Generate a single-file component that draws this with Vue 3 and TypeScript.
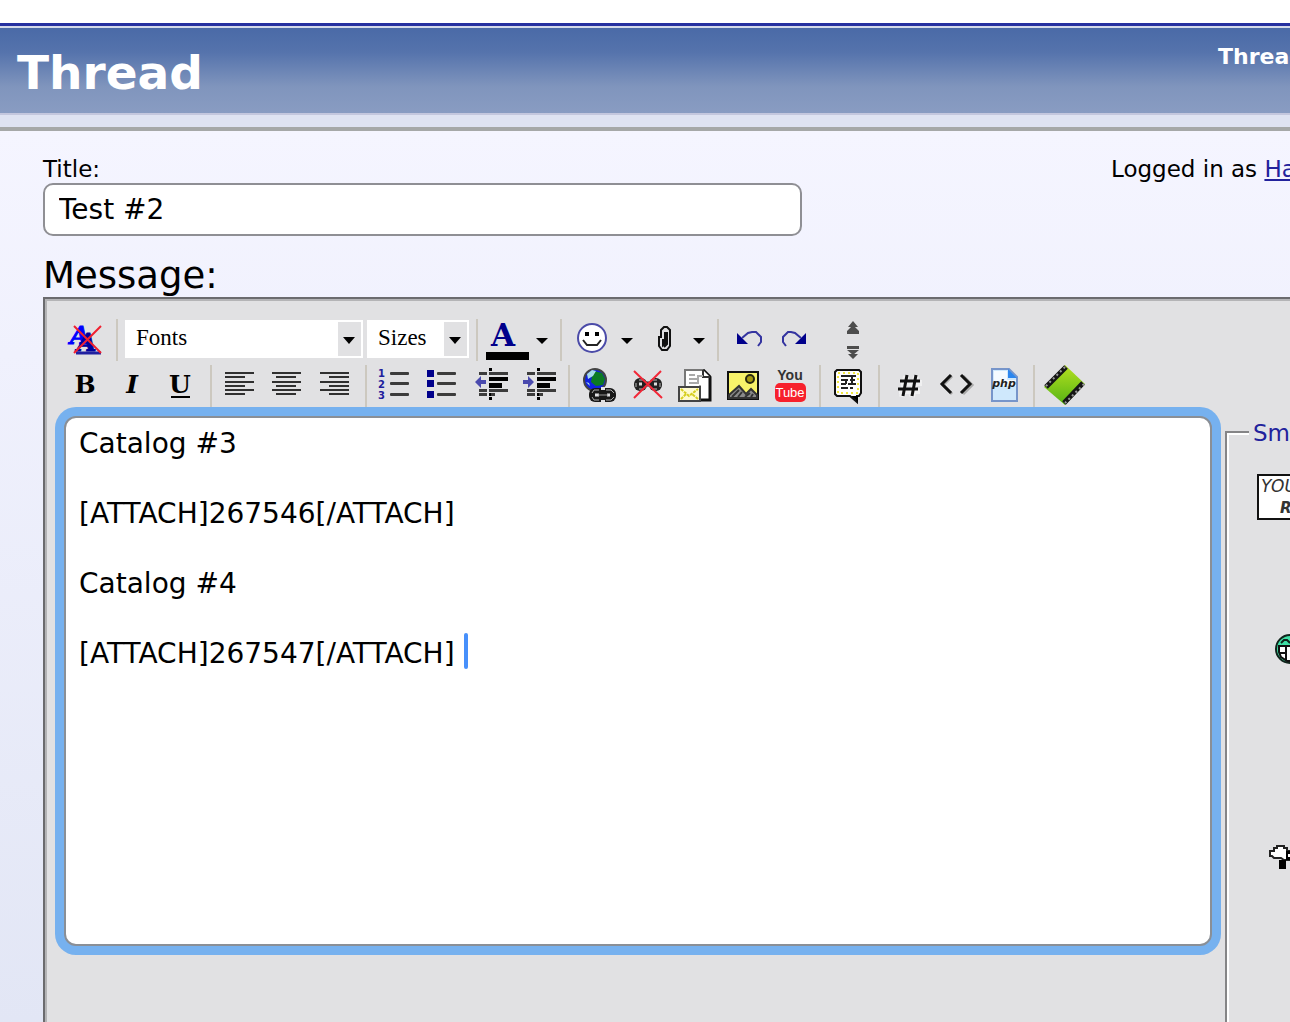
<script setup lang="ts">
import { ref } from 'vue'

const title = ref('Test #2')
const message = ref(
  'Catalog #3\n\n[ATTACH]267546[/ATTACH]\n\nCatalog #4\n\n[ATTACH]267547[/ATTACH]',
)
const fonts = ['Fonts']
const sizes = ['Sizes']
const alignments = [
  { name: 'Align left', long: 9, short: 9 },
  { name: 'Align center', long: 8, short: 12 },
  { name: 'Align right', long: 8, short: 17 },
]
const alignRows = [7, 16, 24]
const bulletRows = [9, 19, 30]
const indents = [
  { name: 'Decrease indent', arrow: 'M8 17l6-6v4h5v4h-5v4z' },
  { name: 'Increase indent', arrow: 'M19 17l-6-6v4H8v4h5v4z' },
]
</script>

<template>
  <div class="page">
    <header class="banner">
      <h1>Thread</h1>
      <a class="tools" href="#">Thread</a>
    </header>
    <div class="strip"></div>

    <main>
      <div class="heading">
        <div class="title-field">
          <label for="title">Title:</label>
          <input id="title" v-model="title" type="text" />
        </div>
        <p class="login">Logged in as <a href="#">Ha</a></p>
      </div>
      <label class="message-label" for="message">Message:</label>

      <section class="editor">
        <div class="row row-top">
          <button type="button" aria-label="Remove formatting">
            <svg viewBox="0 0 48 42">
              <g font-family="DejaVu Serif" font-weight="bold" font-style="italic">
                <text x="7" y="25" font-size="25" fill="#0000ff" stroke="#0000ff">A</text>
                <text x="14" y="32" font-size="25" fill="#00009c" stroke="#00009c">A</text>
              </g>
              <path d="M13 34h25" stroke="#2020a0" stroke-width="3" />
              <path d="M11 7l27 27M38 7L11 34" stroke="#f02030" stroke-width="2" />
            </svg>
          </button>
          <i class="sep"></i>
          <div class="combo combo-font">
            <select aria-label="Fonts"><option v-for="f in fonts" :key="f">{{ f }}</option></select>
            <span class="drop"><svg viewBox="0 0 12 7"><path d="M0 0h12L6 7z" /></svg></span>
          </div>
          <div class="combo combo-size">
            <select aria-label="Sizes"><option v-for="s in sizes" :key="s">{{ s }}</option></select>
            <span class="drop"><svg viewBox="0 0 12 7"><path d="M0 0h12L6 7z" /></svg></span>
          </div>
          <i class="sep"></i>
          <button type="button" class="color" aria-label="Text color">
            <svg viewBox="0 0 48 42">
              <text x="20" y="27" font-size="31" text-anchor="middle" font-family="DejaVu Serif" font-weight="bold" fill="#00008b">A</text>
              <path d="M3 33h43v8H3z" />
            </svg>
          </button>
          <button type="button" class="more" aria-label="More colors"><svg viewBox="0 0 24 42"><path d="M5 19h12l-6 6z" /></svg></button>
          <i class="sep"></i>
          <button type="button" class="spaced" aria-label="Smilies">
            <svg viewBox="0 0 48 42">
              <circle cx="24" cy="19" r="14" fill="#fff" stroke="#4b4ba8" stroke-width="2" />
              <path d="M17 13h4v4h-4zM27 13h4v4h-4z" />
              <path d="M15 21l4 5h10l4-5" fill="none" stroke="#222" stroke-width="2" />
            </svg>
          </button>
          <button type="button" class="more" aria-label="More smilies"><svg viewBox="0 0 24 42"><path d="M5 19h12l-6 6z" /></svg></button>
          <button type="button" aria-label="Attachments">
            <svg viewBox="0 0 48 42">
              <path d="M19 27V18h2v-7l3-3h3l3 3v16l-3 4h-5z" fill="#e1e1e3" stroke="#111" stroke-width="2" />
              <path d="M25 13v11l-2 2v-6M27 13v12l-3 3" fill="none" stroke="#111" stroke-width="2" />
            </svg>
          </button>
          <button type="button" class="more" aria-label="More attachments"><svg viewBox="0 0 24 42"><path d="M5 19h12l-6 6z" /></svg></button>
          <i class="sep"></i>
          <button type="button" class="spaced" aria-label="Undo">
            <svg viewBox="0 0 48 42">
              <path d="M12 14l11 11H12z" fill="#00008b" />
              <path d="M17 19l6-5 4-1h4l5 5v5l-3 4" fill="none" stroke="#3434a0" stroke-width="2" />
            </svg>
          </button>
          <button type="button" aria-label="Redo">
            <svg viewBox="0 0 48 42">
              <path d="M33 14v11H22z" fill="#00008b" />
              <path d="M28 19l-6-5-4-1h-3l-5 5v5l3 4" fill="none" stroke="#3434a0" stroke-width="2" />
            </svg>
          </button>
          <button type="button" class="resize" aria-label="Resize editor">
            <svg viewBox="0 0 48 42">
              <path d="M24 2l5 6H19zM24 6l6 6H18zM18 12h12v3H18zM18 27h12v3H18zM18 31h12l-6 5zM19 35h10l-5 5z" fill="#4d4d4d" />
            </svg>
          </button>
        </div>

        <div class="row">
          <button type="button" aria-label="Bold"><svg viewBox="0 0 48 42"><text class="glyph" x="24" y="28">B</text></svg></button>
          <button type="button" aria-label="Italic"><svg viewBox="0 0 48 42"><text class="glyph" x="23" y="28" font-style="italic">I</text></svg></button>
          <button type="button" aria-label="Underline"><svg viewBox="0 0 48 42"><text class="glyph" x="23" y="28">U</text><path d="M14 31h19v2H14z" /></svg></button>
          <i class="sep"></i>
          <button v-for="a in alignments" :key="a.name" type="button" :aria-label="a.name">
            <svg viewBox="0 0 48 42" fill="#303030">
              <template v-for="y in alignRows" :key="y">
                <rect :x="a.long" :y="y" width="29" height="2" />
                <rect :x="a.short" :y="y + 4" width="20" height="2" />
              </template>
            </svg>
          </button>
          <i class="sep"></i>
          <button type="button" aria-label="Numbered list">
            <svg viewBox="0 0 48 42">
              <g font-family="DejaVu Sans" font-weight="bold" font-size="10" fill="#20209c">
                <text x="7" y="12">1</text><text x="7" y="23">2</text><text x="7" y="34">3</text>
              </g>
              <rect v-for="y in bulletRows" :key="y" x="19" :y="y - 2" width="19" height="3" rx="1" fill="#3c3c3c" />
            </svg>
          </button>
          <button type="button" aria-label="Bulleted list">
            <svg viewBox="0 0 48 42">
              <template v-for="y in bulletRows" :key="y">
                <rect x="8" :y="y - 4" width="7" height="7" fill="#00008b" />
                <rect x="18" :y="y - 2" width="19" height="3" rx="1" fill="#3c3c3c" />
              </template>
            </svg>
          </button>
          <button v-for="n in indents" :key="n.name" type="button" :aria-label="n.name">
            <svg viewBox="0 0 48 42">
              <path :d="n.arrow" fill="#4a4aae" />
              <path d="M12 7h8v3h-8zM12 24h8v3h-8zM12 28h8v3h-8zM22 7h19v3H22zM22 24h19v3H22zM24 28h4v3h-4z" fill="#3c3c3c" />
              <path d="M22 12h19v4H22zM22 18h13v5H22zM22 3h3v3h-3zM22 32h3v3h-3zM22 28h2v3h-2z" />
            </svg>
          </button>
          <i class="sep"></i>
          <button type="button" aria-label="Insert link">
            <svg viewBox="0 0 48 42">
              <circle cx="21" cy="15" r="11" fill="#1020e0" stroke="#444" stroke-width="2" />
              <path d="M20 6l8 2 3 6-2 6-7 1-5-4 1-6z" fill="#0b7a22" />
              <path d="M13 9l5-4 4 1-3 5-5 3zM12 17l3 1 1 3z" fill="#a8dce8" />
              <rect x="15" y="23" width="27" height="14" rx="6" fill="#181818" />
              <path d="M27 22h4v3h-4zM27 35h4v3h-4z" fill="#e1e1e3" />
              <path d="M18 28l2-3h5M32 25h5l3 3M18 32l2 3h5M32 35h5l3-3" fill="none" stroke="#aaa" />
              <path d="M21 30h4M33 30h3" stroke="#e1e1e3" stroke-width="3" />
              <path d="M24 30h10" stroke="#999" stroke-width="1" />
            </svg>
          </button>
          <button type="button" aria-label="Remove link">
            <svg viewBox="0 0 48 42">
              <rect x="12" y="13" width="13" height="13" rx="6" fill="#222" />
              <rect x="27" y="13" width="13" height="13" rx="6" fill="#222" />
              <path d="M22 19h8" stroke="#222" stroke-width="5" />
              <path d="M17 15h4M31 15h4M17 24h4M31 24h4M14 18v4M38 18v4" stroke="#bbb" />
              <path d="M17 19h3M32 19h3" stroke="#ddd" stroke-width="3" />
              <path d="M12 6l28 27M39 6L12 33" stroke="#f22838" stroke-width="2" />
            </svg>
          </button>
          <button type="button" aria-label="Insert email">
            <svg viewBox="0 0 48 42">
              <path d="M15 5h19l6 6v24H15z" fill="#fff" stroke="#777" stroke-width="2" />
              <path d="M33 5l7 7v23h-9" fill="none" stroke="#111" stroke-width="3" />
              <path d="M33 5v7h7" fill="#fff" stroke="#333" stroke-width="2" />
              <path d="M19 10h6M19 14h8M19 18h8M28 19v-8h5M30 20v14" fill="none" stroke="#aaa" stroke-width="2" />
              <path d="M9 22h21v14H9z" fill="#fffbd0" stroke="#444" stroke-width="2" />
              <path d="M11 24l8 7 9-7M11 34l5-5M28 34l-6-5" fill="none" stroke="#d6ce20" stroke-width="2" stroke-dasharray="3 1" />
            </svg>
          </button>
          <button type="button" aria-label="Insert image">
            <svg viewBox="0 0 48 42">
              <path d="M10 7h30v27H10z" fill="#f8f36a" stroke="#111" stroke-width="2" />
              <circle cx="32" cy="14" r="4" fill="#a59a10" stroke="#2a2a10" stroke-width="2" />
              <path d="M11 33V30l10-9 7 8 5-5 6 6v3z" fill="#8a8a8a" stroke="#333" stroke-width="2" />
              <path d="M14 32l7-7M20 32l4-5M27 32l5-4M33 32l2-3" stroke="#333" stroke-width="2" />
            </svg>
          </button>
          <button type="button" aria-label="Insert YouTube video">
            <svg viewBox="0 0 48 42">
              <rect x="9" y="18" width="31" height="19" rx="5" fill="#f7202c" />
              <text x="24" y="15" text-anchor="middle" font-family="Liberation Sans" font-weight="bold" font-size="14" fill="#333">You</text>
              <text x="24" y="32" text-anchor="middle" font-family="Liberation Sans" font-size="13" fill="#fff">Tube</text>
            </svg>
          </button>
          <i class="sep"></i>
          <button type="button" aria-label="Insert quote">
            <svg viewBox="0 0 48 42">
              <path d="M12 5h22l2 2v21l-2 3h-2v6l-7-6H12l-2-2V7z" fill="#fff" stroke="#111" stroke-width="2" />
              <path d="M13 8h20v20H13z" fill="none" stroke="#f0e640" stroke-width="2" stroke-dasharray="2 3" />
              <path d="M16 11h15M16 15h7M25 15h5M16 19h5M23 19h8M16 23h7M25 23h3M27 11v4M21 15v4M27 15v4" stroke="#222" stroke-width="2" />
              <path d="M26 31h7v6z" />
            </svg>
          </button>
          <i class="sep"></i>
          <button type="button" aria-label="Insert code">
            <svg viewBox="0 0 48 42">
              <path d="M22 11l-4 21M32 11l-4 21M17 18h21M15 26h21" stroke="#fff" stroke-width="6" opacity=".5" />
              <path d="M23 10l-4 21M32 10l-4 21M16 16h20M14 24h20" stroke="#111" stroke-width="3" />
            </svg>
          </button>
          <button type="button" aria-label="Insert HTML">
            <svg viewBox="0 0 48 42" fill="none" stroke-width="3">
              <path d="M20 11l-9 9 9 9M31 11l9 9-9 9" stroke="#aaa" />
              <path d="M19 10l-9 9 9 9M29 10l9 9-9 9" stroke="#111" />
            </svg>
          </button>
          <button type="button" aria-label="Insert PHP">
            <svg viewBox="0 0 48 42">
              <path d="M12 4h17l8 8v24H12z" fill="#cfe8fc" stroke="#7795ca" stroke-width="2" />
              <path d="M14 6h13v9h9v6H14z" fill="#f4faff" />
              <path d="M28 4l9 9h-9z" fill="#2b86ee" />
              <text x="24" y="22" text-anchor="middle" font-family="DejaVu Sans" font-style="italic" font-weight="bold" font-size="11" fill="#222">php</text>
            </svg>
          </button>
          <i class="sep"></i>
          <button type="button" aria-label="Insert video">
            <svg viewBox="0 0 48 42">
              <defs>
                <linearGradient id="film" x1="0" y1="0" x2="0" y2="1">
                  <stop offset="0" stop-color="#b5e020" /><stop offset="1" stop-color="#55b414" />
                </linearGradient>
              </defs>
              <path d="M26 0l20 19-20 21L5 22z" fill="url(#film)" />
              <path d="M27 2L7 22M44 18L25 38" stroke="#151515" stroke-width="5" />
              <path d="M26 2L6 22M45 19L26 38" stroke="#999" stroke-width="2" stroke-dasharray="2 3" />
            </svg>
          </button>
        </div>

        <div class="workspace">
          <div class="message">
            <textarea id="message" v-model="message" spellcheck="false"></textarea>
            <span class="caret"></span>
          </div>
          <fieldset>
            <legend>Sm</legend>
            <button type="button" class="smilie sign" aria-label="Sign smilie">
              <svg viewBox="0 0 60 46">
                <path d="M1 1h58v44H1z" fill="#fff" stroke="#111" stroke-width="2" />
                <g font-family="DejaVu Sans" font-style="italic" font-size="17" fill="#333">
                  <text x="4" y="18">YOU</text><text x="23" y="39" font-size="15" font-weight="bold">R</text>
                </g>
              </svg>
            </button>
            <button type="button" class="smilie grin" aria-label="Grin smilie">
              <svg viewBox="0 0 32 32">
                <circle cx="16" cy="16" r="14" fill="#3fe0a6" stroke="#10241c" stroke-width="2" />
                <path d="M7 10l3-3h3l3 3" fill="none" stroke="#10241c" stroke-width="2" />
                <path d="M5 13h24v6l-4 6-6 3h-6l-6-4-2-5z" fill="#fff" stroke="#111" stroke-width="2" />
                <path d="M12 13v14M18 13v14M6 20h6" stroke="#111" stroke-width="2" />
              </svg>
            </button>
            <button type="button" class="smilie thumb" aria-label="Thumbs down smilie">
              <svg viewBox="0 0 40 26">
                <path d="M6 3h3V1h7v2h3v3h3v9h-6l-3-2H6l-2-2H2V6h4z" fill="#fff" stroke="#222" stroke-width="2" />
                <path d="M11 15h7v9h-7zM18 6h6v9h-6z" />
                <path d="M20 9h2v3h-2z" fill="#fff" />
              </svg>
            </button>
          </fieldset>
        </div>
      </section>
    </main>
  </div>
</template>

<style>
body {
  margin: 0;
}
</style>

<style scoped>
* {
  box-sizing: border-box;
}
.page {
  display: flex;
  flex-direction: column;
  min-height: 100vh;
  padding-top: 23px;
  overflow: hidden;
  background: #fff;
  color: #000;
  font-family: Verdana, 'DejaVu Sans', sans-serif;
  font-size: 23px;
}
.banner {
  display: flex;
  justify-content: space-between;
  height: 92px;
  padding-left: 17px;
  border-top: 3px solid #2630a0;
  border-bottom: 2px solid #c4c7de;
  background: linear-gradient(#d4daea 0 2px, #4a6aa7 2px, #5573ac 30%, #8095bd 70%, #899cc2);
  color: #fff;
  white-space: nowrap;
}
h1 {
  margin: 0;
  font-size: 47px;
  line-height: 94px;
}
.tools {
  width: 72px;
  padding-top: 17px;
  color: #fff;
  font-size: 22px;
  font-weight: bold;
  line-height: 28px;
  text-decoration: none;
}
.strip {
  height: 16px;
  border-bottom: 4px solid #a6a8a8;
  background: #dfe3f2;
}
main {
  display: flex;
  flex: 1;
  flex-direction: column;
  padding: 24px 0 0 43px;
  background: linear-gradient(#f5f5ff, #f0f1fd 25%, #e2e6f5);
}
.heading {
  display: flex;
  justify-content: space-between;
  line-height: 28px;
}
.title-field {
  flex: 0 1 759px;
}
.title-field label {
  display: block;
}
.title-field input {
  display: block;
  width: 100%;
  height: 53px;
  padding: 0 14px;
  border: 2px solid #8f8f94;
  border-radius: 10px;
  background: #fff;
  font: inherit;
  font-size: 28px;
}
.login {
  flex: none;
  width: 179px;
  margin: 0;
  white-space: nowrap;
}
.login a {
  color: #22229c;
}
.message-label {
  padding-top: 18px;
  font-size: 37px;
  line-height: 43px;
}
.editor {
  display: flex;
  flex: 1;
  flex-direction: column;
  padding: 20px 0 0 15px;
  border: solid #6b6b6e;
  border-width: 2px 0 0 2px;
  background: #e1e1e3;
  box-shadow: inset 2px 2px #b4b4b6;
}
.row {
  display: flex;
  height: 42px;
  margin: 0 0 4px 1px;
}
.row-top {
  padding-left: 2px;
}
.row button,
.smilie {
  flex: none;
  width: 48px;
  height: 42px;
  padding: 0;
  border: 0;
  background: none;
}
.row .more {
  width: 24px;
}
.row .color {
  margin-left: 1px;
}
.row .spaced {
  margin-left: 2px;
}
.row .resize {
  margin-left: 8px;
}
svg {
  display: block;
  width: 100%;
  height: 100%;
  overflow: visible;
}
.sep {
  flex: none;
  width: 2px;
  height: 42px;
  margin: 0 4px 0 5px;
  background: #ccc8bf;
}
.glyph {
  font-family: 'DejaVu Serif', serif;
  font-size: 25px;
  font-weight: bold;
  text-anchor: middle;
}
.combo {
  display: flex;
  position: relative;
  flex: none;
  height: 38px;
  margin: 1px 0 0 3px;
}
.combo-font {
  width: 238px;
}
.combo-size {
  width: 102px;
  margin-left: 4px;
}
.combo + .sep {
  margin-left: 7px;
}
.combo select {
  width: 100%;
  padding: 0 0 4px 11px;
  border: 0;
  border-radius: 0;
  appearance: none;
  background: #fff;
  color: #000;
  font-family: 'Liberation Serif', serif;
  font-size: 23px;
}
.drop {
  position: absolute;
  top: 2px;
  right: 2px;
  width: 23px;
  height: 34px;
  padding: 15px 6px 12px 5px;
  background: #e1e1e3;
  pointer-events: none;
}
.workspace {
  display: flex;
  flex: 1;
  gap: 13px;
  padding: 5px 0 0 4px;
}
.message {
  position: relative;
  flex: 1;
}
textarea {
  display: block;
  width: 100%;
  height: 530px;
  padding: 8px 13px;
  border: 2px solid #8a8f96;
  border-radius: 12px;
  outline: 0;
  background: #fff;
  box-shadow: 0 0 0 9px #76b1ef;
  font: inherit;
  font-size: 28px;
  line-height: 35px;
  resize: none;
}
.caret {
  position: absolute;
  top: 217px;
  left: 400px;
  width: 4px;
  height: 36px;
  border-radius: 2px;
  background: #4790fb;
}
fieldset {
  flex: none;
  width: 65px;
  min-width: 0;
  margin: 0;
  padding: 0 0 0 30px;
  border: solid #858587;
  border-width: 2px 0 0 2px;
  box-shadow: inset 2px 2px #fff;
}
legend {
  margin-left: -8px;
  padding: 3px 0 0 4px;
  background: #e1e1e3;
  color: #22229c;
  line-height: 28px;
}
.smilie {
  display: block;
}
.sign {
  width: 60px;
  height: 46px;
  margin-top: 27px;
}
.grin {
  width: 32px;
  height: 32px;
  margin: 113px 0 0 17px;
}
.thumb {
  width: 40px;
  height: 26px;
  margin: 180px 0 0 11px;
}
</style>
